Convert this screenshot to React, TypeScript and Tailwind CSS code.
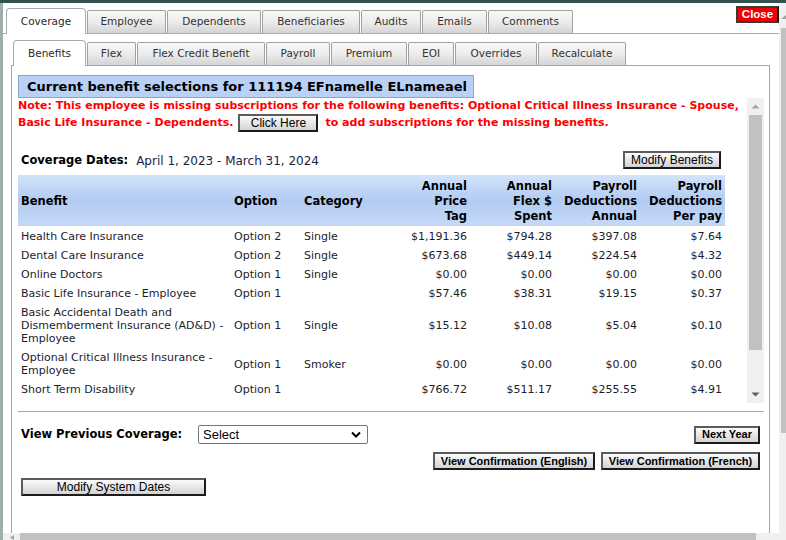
import React from "react";

const sans = "font-['DejaVu_Sans',Verdana,sans-serif]";
const arial = "font-['Liberation_Sans',Arial,sans-serif]";

const btn =
  "inline-flex items-center justify-center h-[18px] border-2 border-t-[#5c5c5c] border-l-[#5c5c5c] border-r-[#1c1c1c] border-b-[#1c1c1c] bg-linear-to-b from-[#fbfbfb] to-[#d3d3d3] text-black leading-none whitespace-nowrap " +
  arial;

function OuterTab({ label, w, active }: { label: string; w: number; active?: boolean }) {
  if (active)
    return (
      <div
        style={{ width: w }}
        className="h-[26px] -mb-px relative z-10 flex items-center justify-center bg-white border border-b-0 border-[#a3aeb4] rounded-t-[4px] text-[10.5px] text-[#2a2a2a]"
      >
        {label}
      </div>
    );
  return (
    <div
      style={{ width: w }}
      className="h-[23px] flex items-center justify-center bg-linear-to-b from-[#f8f8f8] via-[#ececec] to-[#d4d4d4] border border-b-0 border-[#a2a2a2] rounded-t-[2px] text-[10.5px] text-[#333]"
    >
      {label}
    </div>
  );
}

type Row = {
  b: React.ReactNode;
  o: string;
  c: string;
  v: [string, string, string, string];
};

const rows: Row[] = [
  { b: "Health Care Insurance", o: "Option 2", c: "Single", v: ["$1,191.36", "$794.28", "$397.08", "$7.64"] },
  { b: "Dental Care Insurance", o: "Option 2", c: "Single", v: ["$673.68", "$449.14", "$224.54", "$4.32"] },
  { b: "Online Doctors", o: "Option 1", c: "Single", v: ["$0.00", "$0.00", "$0.00", "$0.00"] },
  { b: "Basic Life Insurance - Employee", o: "Option 1", c: "", v: ["$57.46", "$38.31", "$19.15", "$0.37"] },
  {
    b: (
      <>
        Basic Accidental Death and
        <br />
        Dismemberment Insurance (AD&amp;D) -
        <br />
        Employee
      </>
    ),
    o: "Option 1",
    c: "Single",
    v: ["$15.12", "$10.08", "$5.04", "$0.10"],
  },
  {
    b: (
      <>
        Optional Critical Illness Insurance -
        <br />
        Employee
      </>
    ),
    o: "Option 1",
    c: "Smoker",
    v: ["$0.00", "$0.00", "$0.00", "$0.00"],
  },
  { b: "Short Term Disability", o: "Option 1", c: "", v: ["$766.72", "$511.17", "$255.55", "$4.91"] },
];

function UpArrow({ color = "#a3a3a3" }: { color?: string }) {
  return (
    <svg width="9" height="5" viewBox="0 0 9 5">
      <path d="M0.5 4.5 L4.5 0.5 L8.5 4.5 Z" fill={color} />
    </svg>
  );
}
function DownArrow() {
  return (
    <svg width="9" height="5" viewBox="0 0 9 5">
      <path d="M0.5 0.5 L4.5 4.5 L8.5 0.5 Z" fill="#5f5f5f" />
    </svg>
  );
}

const th = "px-[3px] pt-[4px] pb-[1px] align-middle border-b border-[#bcd3f6]";

export default function App() {
  return (
    <div className={"w-[786px] h-[540px] overflow-hidden bg-white flex flex-col " + sans}>
      <div className="h-[3px] bg-[#34504f] shrink-0" />
      <div className="flex-1 flex min-h-0">
        <div className="w-[3px] bg-[#9db0a5] shrink-0" />
        <div className="flex-1 flex flex-col min-w-0">
          <div className="flex-1 min-h-0 flex flex-col">
            {/* outer tabs */}
            <div className="h-[31px] shrink-0 flex items-end gap-[1px] pl-[3px] border-b border-[#a0b0b8]">
              <OuterTab label="Coverage" w={80} active />
              <OuterTab label="Employee" w={79} />
              <OuterTab label="Dependents" w={94} />
              <OuterTab label="Beneficiaries" w={98} />
              <OuterTab label="Audits" w={60} />
              <OuterTab label="Emails" w={65} />
              <OuterTab label="Comments" w={85} />
              <div
                className={
                  "ml-auto self-start mt-[3px] w-[43px] h-[17px] flex items-center justify-center bg-[#ee0000] border-2 border-[#3a3a3a] border-r-[#1a1a1a] text-white font-bold text-[11.5px] leading-none " +
                  arial
                }
              >
                Close
              </div>
            </div>
            {/* inner panel */}
            <div className="pl-[8px] flex-1 min-h-0 flex flex-col">
              <div className="w-[759px] h-[32px] shrink-0 flex items-end gap-[1px] pl-[2px] border-b border-[#9aabb5]">
                <OuterTab label="Benefits" w={73} active />
                <OuterTab label="Flex" w={49} />
                <OuterTab label="Flex Credit Benefit" w={128} />
                <OuterTab label="Payroll" w={64} />
                <OuterTab label="Premium" w={76} />
                <OuterTab label="EOI" w={46} />
                <OuterTab label="Overrides" w={82} />
                <OuterTab label="Recalculate" w={88} />
              </div>
              <div className="w-[759px] flex-1 border-x border-[#9aabb5] pl-[6px] pr-[5px] pt-[9px]">
                <div className="w-[456px] h-[23px] bg-[#b9d1f7] border border-[#8ea6c6] flex items-center pl-[8px] font-bold text-[13px] text-black whitespace-nowrap">
                  Current benefit selections for 111194 EFnamelle ELnameael
                </div>
                <div className="flex h-[305px]">
                  <div className="w-[729px] h-full overflow-hidden">
                    <div className="text-[#ff0000] font-bold text-[11px] whitespace-nowrap">
                      <div className="h-[16px] leading-[15px]">
                        Note: This employee is missing subscriptions for the following benefits: Optional Critical Illness Insurance - Spouse,
                      </div>
                      <div className="h-[18px] flex items-center">
                        <span>Basic Life Insurance - Dependents.</span>
                        <span className={btn + " ml-[5px] w-[80px] text-[12px] font-normal"}>Click Here</span>
                        <span className="ml-[7px]">to add subscriptions for the missing benefits.</span>
                      </div>
                    </div>
                    <div className="mt-[19px] w-[707px] h-[18px] flex items-center justify-between pl-[3px] pr-[4px]">
                      <div className="flex items-center pt-[1px]">
                        <span className="font-bold text-[11.5px] text-black">Coverage Dates:</span>
                        <span className="ml-[8px] text-[12px] text-[#1b2340]">April 1, 2023 - March 31, 2024</span>
                      </div>
                      <span className={btn + " w-[98px] text-[12px]"}>Modify Benefits</span>
                    </div>
                    <table className="mt-[6px] w-[707px] table-fixed border-collapse">
                      <colgroup>
                        <col style={{ width: 213 }} />
                        <col style={{ width: 70 }} />
                        <col style={{ width: 84 }} />
                        <col style={{ width: 85 }} />
                        <col style={{ width: 85 }} />
                        <col style={{ width: 85 }} />
                        <col style={{ width: 85 }} />
                      </colgroup>
                      <thead>
                        <tr className="bg-linear-to-b from-[#d3e3fb] via-[#b2cbf2] to-[#c6daf8] text-[11.5px] font-bold text-black leading-[15px]">
                          <th className={th + " text-left"}>Benefit</th>
                          <th className={th + " text-left"}>Option</th>
                          <th className={th + " text-left"}>Category</th>
                          <th className={th + " text-right"}>
                            Annual
                            <br />
                            Price
                            <br />
                            Tag
                          </th>
                          <th className={th + " text-right"}>
                            Annual
                            <br />
                            Flex $
                            <br />
                            Spent
                          </th>
                          <th className={th + " text-right whitespace-nowrap"}>
                            Payroll
                            <br />
                            Deductions
                            <br />
                            Annual
                          </th>
                          <th className={th + " text-right whitespace-nowrap"}>
                            Payroll
                            <br />
                            Deductions
                            <br />
                            Per pay
                          </th>
                        </tr>
                      </thead>
                      <tbody className="text-[11px] leading-[13px] text-[#1c1c2c]">
                        {rows.map((r, i) => (
                          <tr key={i}>
                            <td className="px-[3px] pt-[4px] pb-[2px] align-middle whitespace-nowrap">{r.b}</td>
                            <td className="px-[3px] pt-[4px] pb-[2px] align-middle">{r.o}</td>
                            <td className="px-[3px] pt-[4px] pb-[2px] align-middle">{r.c}</td>
                            {r.v.map((v, j) => (
                              <td key={j} className="px-[3px] pt-[4px] pb-[2px] align-middle text-right">
                                {v}
                              </td>
                            ))}
                          </tr>
                        ))}
                      </tbody>
                    </table>
                  </div>
                  {/* inner scrollbar */}
                  <div className="w-[17px] h-full bg-[#f0f0f0] flex flex-col items-center">
                    <div className="h-[17px] w-full flex items-center justify-center">
                      <UpArrow />
                    </div>
                    <div className="w-[13px] h-[235px] bg-[#c1c1c1]" />
                    <div className="flex-1" />
                    <div className="h-[17px] w-full flex items-center justify-center">
                      <DownArrow />
                    </div>
                  </div>
                </div>
                <div className="mt-[8px] h-px w-[746px] bg-[#a8a8a8]" />
                <div className="mt-[13px] w-[746px] h-[19px] flex items-center pl-[3px] pr-[4px]">
                  <span className="w-[177px] font-bold text-[11.5px] text-black whitespace-nowrap">View Previous Coverage:</span>
                  <div
                    className={
                      "w-[170px] h-[19px] border border-[#767676] rounded-[2px] flex items-center justify-between pl-[4px] pr-[6px] text-[13px] text-black bg-white " +
                      arial
                    }
                  >
                    <span>Select</span>
                    <svg width="10" height="7" viewBox="0 0 10 7">
                      <path d="M1 1.5 L5 5.5 L9 1.5" fill="none" stroke="#000" strokeWidth="2" />
                    </svg>
                  </div>
                  <span className={btn + " ml-auto w-[66px] text-[11px] font-bold"}>Next Year</span>
                </div>
                <div className="mt-[8px] w-[746px] flex justify-end gap-[6px] pr-[4px]">
                  <span className={btn + " w-[162px] text-[11px] font-bold"}>View Confirmation (English)</span>
                  <span className={btn + " w-[159px] text-[11px] font-bold"}>View Confirmation (French)</span>
                </div>
                <div className="mt-[8px] pl-[3px] flex">
                  <span className={btn + " w-[185px] text-[12px]"}>Modify System Dates</span>
                </div>
              </div>
            </div>
          </div>
          {/* bottom scrollbar */}
          <div className="h-[7px] shrink-0 bg-[#f0f0f0] flex items-start">
            <div className="w-[17px] h-[7px] flex items-end justify-center">
              <svg width="4" height="5" viewBox="0 0 4 5">
                <path d="M0 2.5 L4 0 L4 5 Z" fill="#a3a3a3" />
              </svg>
            </div>
            <div className="w-[736px] h-[7px] bg-[#c1c1c1]" />
          </div>
        </div>
        {/* right page scrollbar */}
        <div className="w-[7px] shrink-0 bg-[#f0f0f0] flex flex-col">
          <div className="h-[25px] flex items-center justify-end pt-[2px]">
            <svg width="5" height="4" viewBox="0 0 5 4">
              <path d="M0 4 L5 4 L5 0 Z" fill="#a3a3a3" />
            </svg>
          </div>
          <div className="ml-[2px] w-[5px] h-[405px] bg-[#c1c1c1]" />
        </div>
      </div>
    </div>
  );
}
